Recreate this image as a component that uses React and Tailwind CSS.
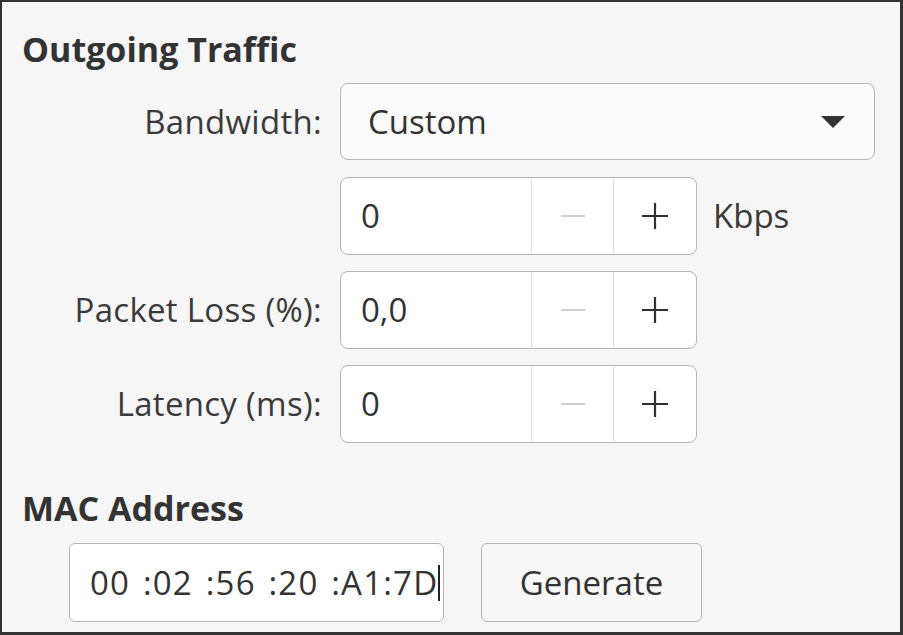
import React from 'react';

const font = { fontFamily: '"Open Sans", "Noto Sans", sans-serif' };

const SpinBox = ({ value }) => (
  <div className="flex h-[78px] w-[357px] rounded-[8px] border border-[#b5b5b5] bg-white">
    <div className="flex flex-1 items-center pl-[20px] text-[33px] text-[#333]">{value}</div>
    <div className="flex w-[82px] items-center justify-center border-l border-[#e2e2e2]">
      <span className="block h-[1.5px] w-[24px] bg-[#cfcfcf]" />
    </div>
    <div className="flex w-[83px] items-center justify-center border-l border-[#e2e2e2]">
      <svg width="28" height="28" viewBox="0 0 28 28">
        <path d="M14 1v26M1 14h26" stroke="#2f2f2f" strokeWidth="2.2" />
      </svg>
    </div>
  </div>
);

const Label = ({ children }) => (
  <div className="flex h-[78px] items-center justify-end text-[33px] tracking-[0.3px] text-[#3a3a3a]">{children}</div>
);

export default function App() {
  return (
    <div
      className="box-border h-[635px] w-[903px] overflow-hidden border-t-2 border-l-2 border-r-[3px] border-b-[3px] border-[#333] bg-[#f6f6f6]"
      style={font}
    >
      <div className="pl-[20px] pt-[24px] text-[34px] font-bold leading-[46px] text-[#333]">Outgoing Traffic</div>

      <div className="mt-[11px] grid grid-cols-[320px_auto] gap-x-[18px] gap-y-[16px]">
        <Label>Bandwidth:</Label>
        <div className="flex h-[77px] w-[535px] items-center justify-between rounded-[8px] border border-[#b5b5b5] bg-[#fbfbfb] pl-[27px] pr-[29px]">
          <span className="text-[33px] text-[#333]">Custom</span>
          <svg width="24" height="12" viewBox="0 0 24 12">
            <path d="M0 0h24L12 12z" fill="#333" />
          </svg>
        </div>

        <div />
        <div className="flex items-center gap-[16px]">
          <SpinBox value="0" />
          <span className="text-[33px] text-[#3a3a3a]">Kbps</span>
        </div>

        <Label>Packet Loss (%):</Label>
        <SpinBox value="0,0" />

        <Label>Latency (ms):</Label>
        <SpinBox value="0" />
      </div>

      <div className="mt-[42px] pl-[20px] text-[34px] font-bold leading-[46px] text-[#333]">MAC Address</div>

      <div className="mt-[12px] flex gap-[37px] pl-[67px]">
        <div className="flex h-[79px] w-[375px] items-center overflow-hidden rounded-[6px] border border-[#b5b5b5] bg-white pl-[20px]">
          <span className="whitespace-nowrap text-[33px] tracking-[1.2px] text-[#333] [word-spacing:3px]">00 :02 :56 :20 :A1:7D</span>
          <span className="block h-[36px] w-[2px] shrink-0 bg-[#222]" />
        </div>
        <div className="flex h-[79px] w-[221px] items-center justify-center rounded-[6px] border border-[#b5b5b5] bg-[#f8f8f8] text-[33px] text-[#333]">
          Generate
        </div>
      </div>
    </div>
  );
}
